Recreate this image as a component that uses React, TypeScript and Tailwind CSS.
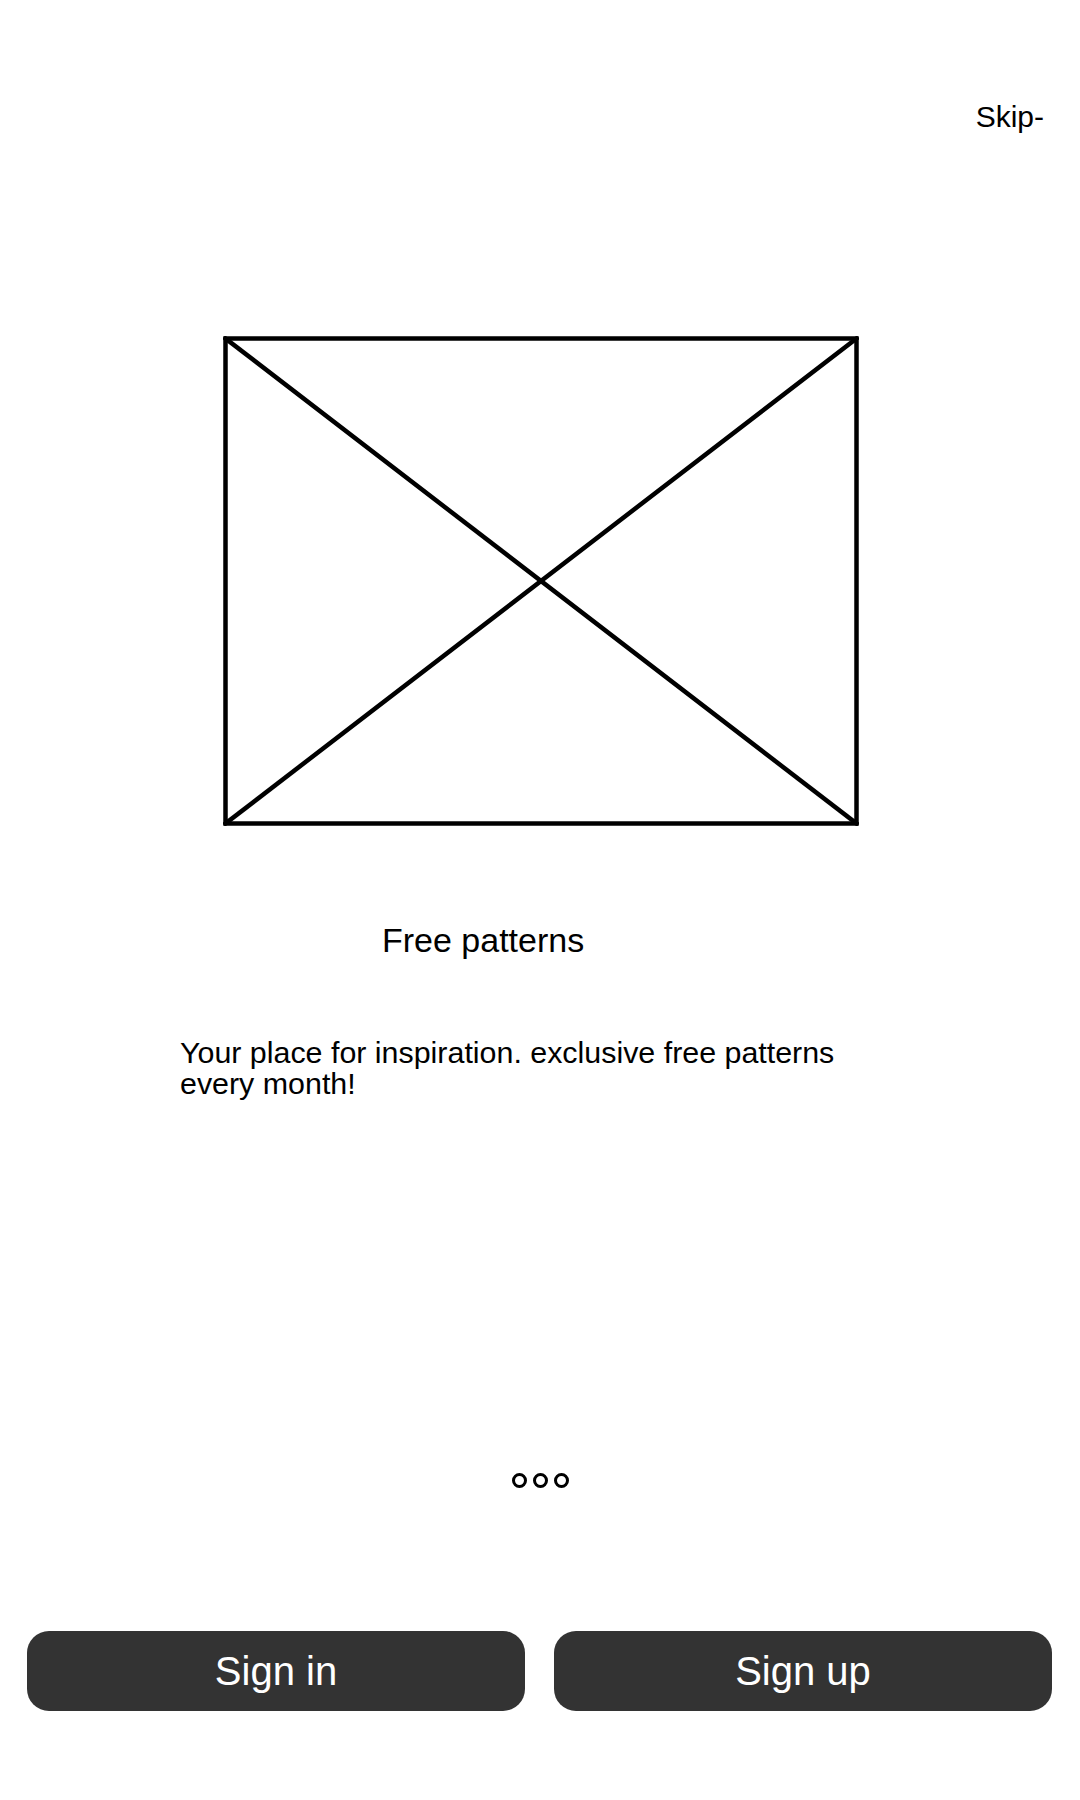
import React from 'react';

const Placeholder: React.FC = () => (
  <svg width="636" height="490" viewBox="0 0 636 490" className="block">
    <g stroke="#000" strokeWidth={4.5} fill="none" strokeLinecap="square">
      <rect x="2.5" y="2.5" width="631" height="485" />
      <line x1="2.5" y1="2.5" x2="633.5" y2="487.5" />
      <line x1="633.5" y1="2.5" x2="2.5" y2="487.5" />
    </g>
  </svg>
);

const App: React.FC = () => {
  const dots = [0, 1, 2];

  return (
    <div className="w-full h-[1800px] bg-white flex flex-col text-black font-['Liberation_Sans',Arial,sans-serif]">
      {/* Top bar */}
      <div className="pt-[101px] pr-[36px] flex justify-end">
        <span className="text-[30px] leading-[32px]">Skip-</span>
      </div>

      {/* Illustration */}
      <div className="mt-[203px] pl-[223px]">
        <Placeholder />
      </div>

      {/* Title */}
      <div className="mt-[95px] pl-[382px]">
        <h1 className="text-[34px] leading-[38px] font-normal">Free patterns</h1>
      </div>

      {/* Description */}
      <div className="mt-[78px] pl-[180px]">
        <p className="w-[700px] text-[30.4px] leading-[31px]">
          Your place for inspiration. exclusive free patterns every month!
        </p>
      </div>

      {/* Pager */}
      <div className="mt-[374px] flex justify-center gap-[6px]">
        {dots.map((d) => (
          <span key={d} className="w-[15px] h-[15px] rounded-full border-[3px] border-black" />
        ))}
      </div>

      {/* Actions */}
      <div className="mt-[143px] pl-[27px] pr-[28px] flex gap-[29px]">
        <button className="flex-1 h-[80px] rounded-[22px] bg-[#333333] text-white text-[40px] flex items-center justify-center">
          Sign in
        </button>
        <button className="flex-1 h-[80px] rounded-[22px] bg-[#333333] text-white text-[40px] flex items-center justify-center">
          Sign up
        </button>
      </div>
    </div>
  );
};

export default App;
